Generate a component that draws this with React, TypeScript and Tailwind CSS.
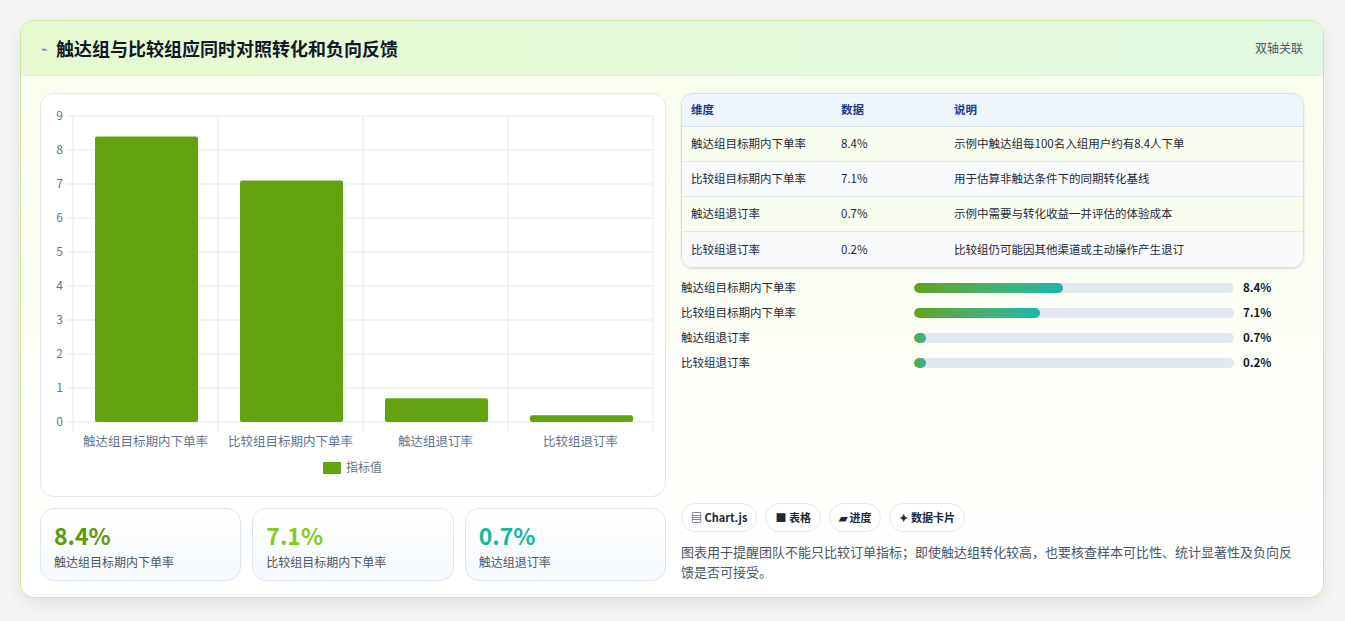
const F = { fontFamily: '"Noto Sans CJK SC", "Noto Sans", sans-serif' };
const rows = [
  ['触达组目标期内下单率', '8.4%', '示例中触达组每100名入组用户约有8.4人下单', 8.4],
  ['比较组目标期内下单率', '7.1%', '用于估算非触达条件下的同期转化基线', 7.1],
  ['触达组退订率', '0.7%', '示例中需要与转化收益一并评估的体验成本', 0.7],
  ['比较组退订率', '0.2%', '比较组仍可能因其他渠道或主动操作产生退订', 0.2],
] as const;

function Chart() {
  const x0 = 32, x1 = 612, y0 = 328, unit = 34, cw = 145;
  return (
    <svg width="625" height="403" className="block">
      {Array.from({ length: 10 }).map((_, i) => (
        <g key={i}>
          <line x1={26} x2={x1} y1={y0 - i * unit} y2={y0 - i * unit} stroke="#e3e8ef" />
          <text x={22} y={y0 - i * unit + 4} textAnchor="end" fontSize="12" fill="#64748b" style={F}>{i}</text>
        </g>
      ))}
      {[0, 1, 2, 3, 4].map(i => (
        <line key={i} x1={x0 + i * cw} x2={x0 + i * cw} y1={22} y2={337} stroke="#e3e8ef" />
      ))}
      {rows.map((r, i) => {
        const h = r[3] * unit;
        return (
          <g key={i}>
            <rect x={x0 + i * cw + 22} y={y0 - h} width={103} height={h} rx={2} fill="#62a30f" />
            <text x={x0 + i * cw + cw / 2} y={352} textAnchor="middle" fontSize="12.5" fill="#64748b" style={F}>{r[0]}</text>
          </g>
        );
      })}
      <rect x={282} y={368} width={18} height={12} fill="#62a30f" />
      <text x={305} y={378} fontSize="12" fill="#64748b" style={F}>指标值</text>
    </svg>
  );
}

export default function App() {
  return (
    <div className="w-[1345px] h-[621px] bg-[#f5f5f5] pt-[20px] pl-[20px]" style={F}>
      <div className="w-[1304px] h-[578px] rounded-[14px] border border-[#c9e89a] bg-gradient-to-b from-[#f9fdec] to-white shadow-[0_6px_18px_rgba(0,0,0,0.08)] overflow-hidden">
        <div className="h-[55px] flex items-center justify-between px-[20px] bg-gradient-to-r from-[#e8f9d0] to-[#e4f9e4] border-b border-[#e2ecd8]">
          <div className="flex items-center gap-[8px]">
            <span className="text-[#3b6fd6] text-[11px]">⌁</span>
            <span className="text-[18px] font-bold text-[#111827]">触达组与比较组应同时对照转化和负向反馈</span>
          </div>
          <span className="text-[12px] text-[#4b5563]">双轴关联</span>
        </div>
        <div className="flex gap-[15px] px-[19px] pt-[17px]">
          <div className="w-[626px] flex flex-col gap-[11px]">
            <div className="h-[404px] rounded-[14px] border border-[#e3e8ef] bg-white"><Chart /></div>
            <div className="grid grid-cols-3 gap-[11px]">
              {[['8.4%', 'text-[#5c9a0c]', '触达组目标期内下单率'], ['7.1%', 'text-[#84cc16]', '比较组目标期内下单率'], ['0.7%', 'text-[#14b8a6]', '触达组退订率']].map(c => (
                <div key={c[0]} className="h-[73px] rounded-[14px] border border-[#dde7f2] bg-gradient-to-b from-white to-[#f5f9fd] px-[13px] pt-[12px]">
                  <div className={`text-[23px] font-bold leading-[28px] ${c[1]}`}>{c[0]}</div>
                  <div className="text-[12px] text-[#4b5563] mt-[4px]">{c[2]}</div>
                </div>
              ))}
            </div>
          </div>
          <div className="w-[626px] flex flex-col">
            <div className="rounded-[12px] border border-[#d5deea] overflow-hidden text-[11.5px] shadow-sm">
              <div className="flex h-[33px] items-center bg-[#eef5fd] text-[#1e3a8a] font-semibold border-b border-[#d5deea]">
                <div className="w-[159px] pl-[9px]">维度</div><div className="w-[113px]">数据</div><div>说明</div>
              </div>
              {rows.map((r, i) => (
                <div key={i} className={`flex h-[35px] items-center text-[#1f2937] ${i < 3 ? 'border-b border-[#e2e8f0]' : ''} ${i % 2 ? 'bg-[#f8fafc]' : 'bg-[#f9fdef]'}`}>
                  <div className="w-[159px] pl-[9px]">{r[0]}</div><div className="w-[113px]">{r[1]}</div><div>{r[2]}</div>
                </div>
              ))}
            </div>
            <div className="flex flex-col gap-[10px] mt-[12px]">
              {rows.map((r, i) => (
                <div key={i} className="flex items-center h-[15px] text-[11.5px]">
                  <div className="w-[233px] text-[#1f2937]">{r[0]}</div>
                  <div className="w-[320px] h-[10px] rounded-full bg-[#e2e8f0] overflow-hidden">
                    <div className="h-full rounded-full bg-gradient-to-r from-[#62a30f] to-[#14b8a6]" style={{ width: Math.max(12, (r[3] / 18) * 320) }} />
                  </div>
                  <div className="ml-[9px] font-bold text-[#111827]">{r[1]}</div>
                </div>
              ))}
            </div>
            <div className="flex gap-[8px] mt-[133px]">
              {['▤ Chart.js', '■ 表格', '▰ 进度', '✦ 数据卡片'].map(t => (
                <span key={t} className="h-[29px] px-[9px] flex items-center rounded-full border border-[#e2e8f0] bg-white text-[11px] font-semibold text-[#1f2937]">{t}</span>
              ))}
            </div>
            <p className="mt-[10px] text-[13px] leading-[20px] text-[#4b5563]">图表用于提醒团队不能只比较订单指标；即使触达组转化较高，也要核查样本可比性、统计显著性及负向反馈是否可接受。</p>
          </div>
        </div>
      </div>
    </div>
  );
}
